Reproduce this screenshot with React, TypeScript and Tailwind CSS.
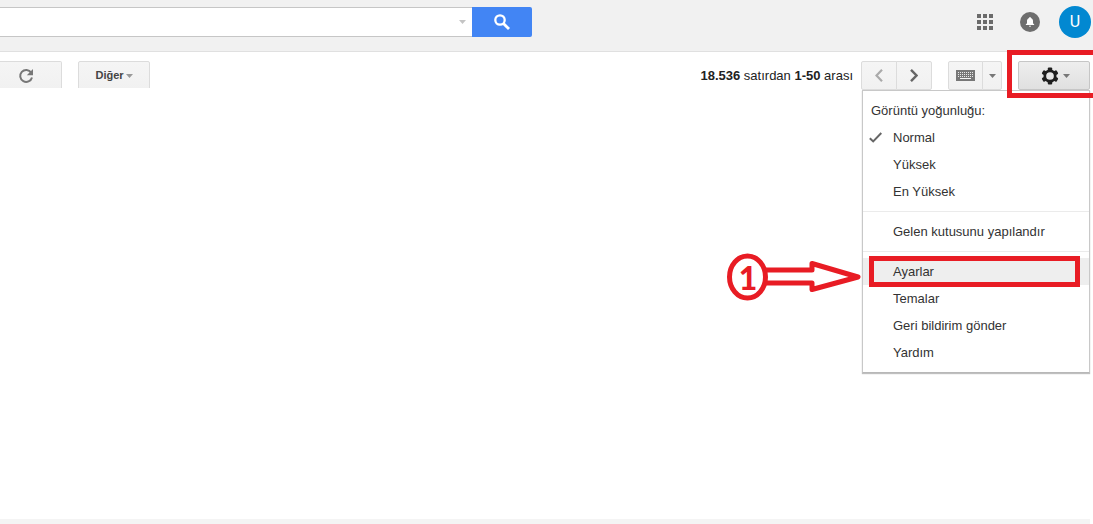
import type { ReactNode } from "react";
import { clsx } from "clsx";

type MenuItem = {
  label: string;
  checked?: boolean;
  active?: boolean;
};

const menuGroups: { title?: string; items: MenuItem[] }[] = [
  {
    title: "Görüntü yoğunluğu:",
    items: [
      { label: "Normal", checked: true },
      { label: "Yüksek" },
      { label: "En Yüksek" },
    ],
  },
  { items: [{ label: "Gelen kutusunu yapılandır" }] },
  {
    items: [
      { label: "Ayarlar", active: true },
      { label: "Temalar" },
      { label: "Geri bildirim gönder" },
      { label: "Yardım" },
    ],
  },
];

const buttonTones = {
  light: "border-[#dcdcdc] from-[#f5f5f5] to-[#f1f1f1]",
  pressed: "border-[#c6c6c6] from-[#eeeeee] to-[#e0e0e0]",
};

function Caret({ className }: { className?: string }) {
  return (
    <svg
      aria-hidden="true"
      className={clsx("w-[7px] h-1 shrink-0", className)}
      viewBox="0 0 7 4"
      fill="currentColor"
    >
      <path d="M0 0h7L3.500 4z" />
    </svg>
  );
}

function GearIcon() {
  return (
    <svg aria-hidden="true" className="w-[18px] h-[18px]" viewBox="-9 -9 18 18">
      <circle r="5.2" fill="none" stroke="#1f1f1f" strokeWidth="2.7" />
      {[0, 60, 120, 180, 240, 300].map((angle) => (
        <path
          key={angle}
          d="M-2.2 -5.4V-7.400Q-2.200 -8.500 -1.200 -8.500H1.200Q2.200 -8.500 2.200 -7.400V-5.400z"
          fill="#1f1f1f"
          transform={`rotate(${angle})`}
        />
      ))}
    </svg>
  );
}

function KeyboardIcon() {
  return (
    <svg aria-hidden="true" className="w-[19px] h-[11px]" viewBox="0 0 19 11">
      <rect width="19" height="11" fill="#777" />
      <path
        d="M2 2.5h16M2 4.5h16M2 6.5h16"
        stroke="#e8e8e8"
        strokeDasharray="1 1"
      />
      <path d="M4 8.5h11" stroke="#f5f5f5" />
    </svg>
  );
}

function ToolbarButton({
  label,
  tone = "light",
  className,
  children,
}: {
  label: string;
  tone?: keyof typeof buttonTones;
  className?: string;
  children: ReactNode;
}) {
  return (
    <button
      type="button"
      aria-label={label}
      className={clsx(
        "flex h-[29px] items-center justify-center border bg-linear-to-b text-[#777]",
        buttonTones[tone],
        className,
      )}
    >
      {children}
    </button>
  );
}

function Header() {
  return (
    <header className="flex h-[52px] items-center justify-between border-b border-[#e0e0e0] bg-[#f1f1f1] pb-[7px] pr-0.5">
      <form className="flex w-[532px]" onSubmit={(e) => e.preventDefault()}>
        <div className="flex h-[30px] flex-1 items-center border-y border-[#c6c6c6] bg-white pr-1.5">
          <input
            type="text"
            aria-label="Ara"
            className="h-full min-w-0 flex-1 px-2 text-base outline-none"
          />
          <button
            type="button"
            aria-label="Arama seçenekleri"
            className="text-[#c4c4c4]"
          >
            <Caret />
          </button>
        </div>
        <button
          type="submit"
          aria-label="Ara"
          className="flex h-[30px] w-[60px] items-center justify-center rounded-r-xs bg-[#4285f4]"
        >
          <svg
            aria-hidden="true"
            className="w-4 h-4"
            viewBox="0 0 16 16"
            fill="none"
            stroke="#fff"
          >
            <circle cx="6" cy="6" r="4.7" strokeWidth="2.3" />
            <path d="M9.4 9.4L15 15" strokeWidth="2.8" />
          </svg>
        </button>
      </form>
      <div className="flex items-center">
        <button type="button" aria-label="Uygulamalar" className="mr-[27px]">
          <svg
            aria-hidden="true"
            className="w-4 h-4"
            viewBox="0 0 16 16"
            fill="#6b6b6b"
          >
            {[0, 6, 12].map((y) =>
              [0, 6, 12].map((x) => (
                <rect key={`${x}-${y}`} x={x} y={y} width="4" height="4" />
              )),
            )}
          </svg>
        </button>
        <button
          type="button"
          aria-label="Bildirimler"
          className="mr-[19px] flex h-5 w-5 items-center justify-center rounded-full bg-[#6e6e6e]"
        >
          <svg
            aria-hidden="true"
            className="w-2.5 h-2.5"
            viewBox="0 0 10 10"
            fill="#fff"
          >
            <path d="M5 0c.6 0 .9.4.9.9C7.300 1.300 8 2.500 8 4v2.300l1.200 1.200V8H.8v-.5L2 6.300V4c0-1.500.7-2.700 2.100-3.100C4.100.4 4.400 0 5 0zM4 8.700h2c0 .6-.4 1-1 1s-1-.4-1-1z" />
          </svg>
        </button>
        <button
          type="button"
          className="h-8 w-8 rounded-full bg-[#0288d1] font-[Roboto,sans-serif] text-base text-white"
        >
          U
        </button>
      </div>
    </header>
  );
}

function SettingsMenu() {
  return (
    <div
      role="menu"
      className="absolute right-0 top-full w-[228px] border border-[#c8c8c8] border-b-[#b8b8b8] bg-white py-1.5 shadow-[0_1px_1px_rgba(0,0,0,0.25)]"
    >
      {menuGroups.map((group, index) => (
        <div
          key={index}
          className={clsx(index > 0 && "mt-1.5 border-t border-[#ebebeb] pt-1.5")}
        >
          {group.title && (
            <p className="px-2 text-[13px] leading-[27px]">{group.title}</p>
          )}
          {group.items.map((item) => (
            <button
              key={item.label}
              type="button"
              role="menuitem"
              className={clsx(
                "relative block w-full pl-[30px] text-left text-[13px] leading-[27px]",
                item.active && "bg-[#eee]",
              )}
            >
              {item.checked && (
                <svg
                  aria-hidden="true"
                  className="absolute left-1.5 top-2 w-[13px] h-[11px]"
                  viewBox="0 0 13 11"
                  fill="none"
                  stroke="#666"
                  strokeWidth="2"
                >
                  <path d="M.8 6.200L4.200 9.400L12.300 1" />
                </svg>
              )}
              {item.label}
              {item.active && <StepMarker />}
            </button>
          ))}
        </div>
      ))}
    </div>
  );
}

// Red frame with the numbered arrow that points at the menu entry
function StepMarker() {
  return (
    <span className="pointer-events-none absolute -top-0.5 left-1.5 right-[9px] h-[31px] border-5 border-[#e81c24]">
      <span className="absolute -left-[148px] -top-2 flex h-12 w-11 items-center justify-center font-[Lato,sans-serif] text-[32px] font-black text-[#e81c24]">
        <svg
          aria-hidden="true"
          className="absolute left-0 top-0 h-12 w-[136px]"
          viewBox="0 0 136 48"
          fill="none"
          stroke="#e81c24"
          strokeWidth="5"
          strokeLinejoin="round"
        >
          <ellipse cx="21.500" cy="24" rx="18" ry="21" />
          <path d="M40 17H86V10.500L132 24L86 36.500V30H40" />
        </svg>
        1
      </span>
    </span>
  );
}

function Toolbar() {
  return (
    <div className="flex items-start justify-between pr-[3px] pt-[9px]">
      <div className="flex h-[27px] gap-4 overflow-hidden">
        <ToolbarButton
          label="Yenile"
          className="w-[62px] rounded-r-xs border-l-0 pr-2.5"
        >
          <svg
            aria-hidden="true"
            className="w-4 h-4"
            viewBox="0 0 16 16"
            fill="none"
          >
            <path
              d="M13.200 4.600A6 6 0 1 0 14 9.500"
              stroke="#777"
              strokeWidth="2"
            />
            <path d="M15 1v6.200H8.800z" fill="#777" />
          </svg>
        </ToolbarButton>
        <ToolbarButton label="Diğer" className="w-[72px] gap-0.5 rounded-xs">
          <span className="text-[11px] font-bold text-[#444]">Diğer</span>
          <Caret className="text-[#999]" />
        </ToolbarButton>
      </div>

      <div className="flex items-center">
        <p className="mr-2 text-[13px] text-[#222]">
          <b>18.536</b> satırdan <b>1-50</b> arası
        </p>
        <div className="mr-4 flex">
          <ToolbarButton label="Daha yeni" className="w-9 rounded-l-xs">
            <svg
              aria-hidden="true"
              className="w-2 h-[13px]"
              viewBox="0 0 8 13"
              fill="none"
              stroke="#aaa"
              strokeWidth="2.2"
            >
              <path d="M7 .8L1.500 6.500L7 12.200" />
            </svg>
          </ToolbarButton>
          <ToolbarButton
            label="Daha eski"
            className="-ml-px w-9 rounded-r-xs"
          >
            <svg
              aria-hidden="true"
              className="w-2 h-[13px]"
              viewBox="0 0 8 13"
              fill="none"
              stroke="#666"
              strokeWidth="2.4"
            >
              <path d="M1 .8L6.500 6.500L1 12.200" />
            </svg>
          </ToolbarButton>
        </div>
        <div className="mr-4 flex">
          <ToolbarButton label="Klavye" className="w-[35px] rounded-l-xs">
            <KeyboardIcon />
          </ToolbarButton>
          <ToolbarButton
            label="Giriş araçları"
            className="-ml-px w-5 rounded-r-xs"
          >
            <Caret className="text-[#777]" />
          </ToolbarButton>
        </div>
        <div className="relative">
          <ToolbarButton
            label="Ayarlar"
            tone="pressed"
            className="w-[72px] gap-1 rounded-xs pl-0.5"
          >
            <GearIcon />
            <Caret />
          </ToolbarButton>
          <SettingsMenu />
          <div className="pointer-events-none absolute -left-[11px] -right-[9px] -top-[11px] h-12 border-5 border-[#e81c24]" />
        </div>
      </div>
    </div>
  );
}

export default function App() {
  return (
    <div className="flex min-h-screen flex-col overflow-x-hidden bg-white font-['Liberation_Sans',Arial,sans-serif] text-[#333]">
      <Header />
      <main className="flex-1">
        <Toolbar />
      </main>
      <footer className="mr-[3px] h-[5px] bg-[#f4f4f4]" />
    </div>
  );
}
